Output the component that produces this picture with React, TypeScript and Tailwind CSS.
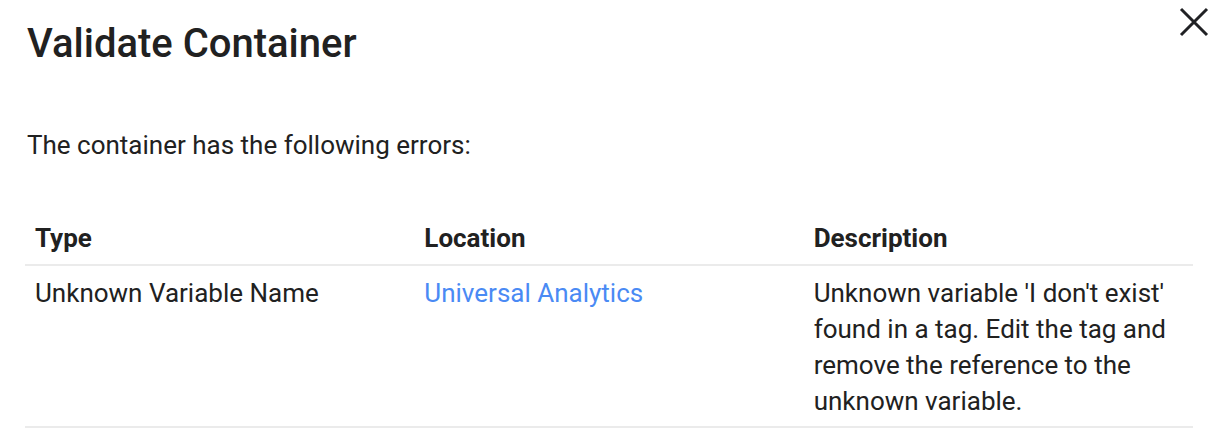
import React from 'react';

type ErrorRow = {
    type: string;
    location: string;
    description: string;
};

const errors: ErrorRow[] = [
    {
        type: 'Unknown Variable Name',
        location: 'Universal Analytics',
        description: "Unknown variable 'I don't exist' found in a tag. Edit the tag and remove the reference to the unknown variable.",
    },
];

function CloseIcon() {
    return (
        <svg width="30" height="30" viewBox="0 0 30 30" fill="none">
            <path d="M2 2L28 28M28 2L2 28" stroke="#202124" strokeWidth="3" />
        </svg>
    );
}

export default function App() {
    return (
        <div className="w-[1228px] h-[438px] bg-white text-[#212121] pl-[27px] pr-[19px] pt-[7px] overflow-hidden" style={{ fontFamily: 'Roboto, "Noto Sans", sans-serif' }}>
            {/* Header */}
            <div className="flex justify-between items-start">
                <h2 className="mt-[15px] text-[40px] leading-[44px] font-medium">Validate Container</h2>
                <button className="text-[#202124]">
                    <CloseIcon />
                </button>
            </div>

            <p className="mt-[61px] text-[26px] leading-[36px]">The container has the following errors:</p>

            <table className="mt-[57px] -ml-[2px] w-[1168px] table-fixed border-collapse text-[26px] leading-[36px]">
                <thead>
                    <tr className="border-b-2 border-[#ebebeb]">
                        <th className="text-left font-bold pl-[10px] pr-[10px] pb-[8px]">Type</th>
                        <th className="text-left font-bold pl-[10px] pr-[10px] pb-[8px]">Location</th>
                        <th className="text-left font-bold pl-[10px] pr-[10px] pb-[8px]">Description</th>
                    </tr>
                </thead>
                <tbody>
                    {errors.map((row, i) => (
                        <tr key={i} className="border-b-2 border-[#ebebeb] align-top">
                            <td className="pl-[10px] pr-[10px] pt-[9px] pb-[7px]">{row.type}</td>
                            <td className="pl-[10px] pr-[10px] pt-[9px] pb-[7px]">
                                <a className="text-[#4a8af4] cursor-pointer">{row.location}</a>
                            </td>
                            <td className="pl-[10px] pr-[10px] pt-[9px] pb-[7px]">{row.description}</td>
                        </tr>
                    ))}
                </tbody>
            </table>
        </div>
    );
}
